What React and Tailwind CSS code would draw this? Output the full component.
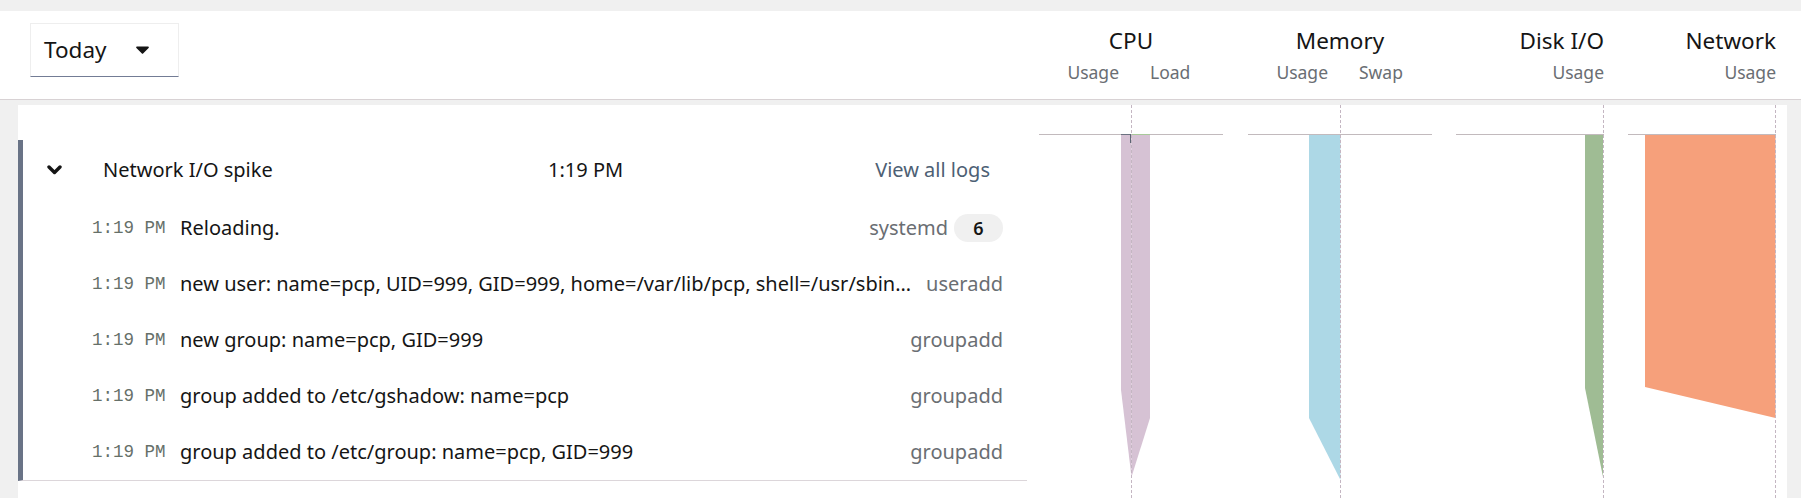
import React from "react";

const logs = [
  { time: "1:19 PM", msg: "Reloading.", src: "systemd", count: 6 },
  { time: "1:19 PM", msg: "new user: name=pcp, UID=999, GID=999, home=/var/lib/pcp, shell=/usr/sbin/nologin, from=none", src: "useradd" },
  { time: "1:19 PM", msg: "new group: name=pcp, GID=999", src: "groupadd" },
  { time: "1:19 PM", msg: "group added to /etc/gshadow: name=pcp", src: "groupadd" },
  { time: "1:19 PM", msg: "group added to /etc/group: name=pcp, GID=999", src: "groupadd" },
];

// chart columns, coordinates relative to the column box (card top = 0)
const charts = [
  {
    key: "cpu", width: 184, axis: 92.5,
    shapes: [
      { fill: "#d6c2d4", points: "82,29 92.5,29 92.5,372 82,285" },
      { fill: "#d6c2d4", points: "92.5,29 111,29 111,313 92.5,372" },
    ],
    marker: true,
  },
  {
    key: "mem", width: 184, axis: 92.5,
    shapes: [{ fill: "#add8e6", points: "61,29 92.5,29 92.5,375 61,313" }],
  },
  {
    key: "disk", width: 148, axis: 147,
    shapes: [{ fill: "#9fbc94", points: "129,29 147,29 147,372 129,283" }],
  },
  {
    key: "net", width: 148, axis: 147.5,
    shapes: [{ fill: "#f6a07b", points: "17,29 147.5,29 147.5,313 17,282" }],
  },
];

function Caret() {
  return (
    <svg width="13" height="8" viewBox="0 0 13 8" className="ml-auto mr-[29px]">
      <path d="M1 0.5h11c0.8 0 1.2 0.9 0.6 1.5l-5.5 5.5c-0.3 0.3-0.9 0.3-1.2 0L0.4 2C-0.2 1.4 0.2 0.5 1 0.5z" fill="#151515" />
    </svg>
  );
}

function Chevron() {
  return (
    <svg width="15" height="10" viewBox="0 0 15 10" className="shrink-0">
      <path d="M2 2l5.5 5.5L13 2" fill="none" stroke="#151515" strokeWidth="3.4" strokeLinecap="round" strokeLinejoin="round" />
    </svg>
  );
}

function ChartColumn({ c }) {
  return (
    <svg width={c.width} height="393" className="shrink-0 block">
      {c.shapes.map((s, i) => (
        <polygon key={i} points={s.points} fill={s.fill} />
      ))}
      <line x1="0" x2={c.width} y1="29.5" y2="29.5" stroke="#c2babd" strokeWidth="1" shapeRendering="crispEdges" />
      <line x1={c.axis} x2={c.axis} y1="0" y2="393" stroke="#c4b6c2" strokeWidth="1" strokeDasharray="3 2" shapeRendering="crispEdges" />
      {c.marker && (
        <g shapeRendering="crispEdges">
          <line x1="82" x2="92" y1="29.5" y2="29.5" stroke="#6b7280" strokeWidth="1" />
          <line x1="91.5" x2="91.5" y1="29" y2="38" stroke="#5b6472" strokeWidth="1" />
          <line x1="93" x2="111" y1="29.5" y2="29.5" stroke="#a8c99a" strokeWidth="1" />
        </g>
      )}
    </svg>
  );
}

function MetricHead({ title, subs, width, split, className = "" }) {
  return (
    <div className={`shrink-0 pt-[16px] ${className}`} style={{ width }}>
      <div className={`text-[22.5px] leading-[28px] ${split ? "text-center" : "text-right"}`}>{title}</div>
      {split ? (
        <div className="grid grid-cols-2 mt-[6px] text-[17.5px] leading-[22px] text-[#6a6e73]">
          <span className="text-right pr-[12px]">{subs[0]}</span>
          <span className="pl-[19px]">{subs[1]}</span>
        </div>
      ) : (
        <div className="mt-[6px] text-[17.5px] leading-[22px] text-[#6a6e73] text-right">{subs[0]}</div>
      )}
    </div>
  );
}

export default function App() {
  return (
    <div className="w-[1801px] h-[498px] overflow-hidden bg-[#f0f0f0] text-[#151515] font-['Noto_Sans',sans-serif]">
      <div className="h-[11px]" />

      {/* toolbar with range picker and metric headings */}
      <header className="h-[89px] bg-white border-b border-[#d8d2d4]">
        <div className="ml-[18px] w-[1769px] flex">
          <div className="w-[1009px] pt-[12px] pl-[12px] shrink-0">
            <button className="w-[149px] h-[54px] flex items-center pl-[13px] border border-[#eeeeee] border-b-[#737c95] text-[22.5px] leading-none">
              <span>Today</span>
              <Caret />
            </button>
          </div>
          <div className="ml-[12px] flex">
            <MetricHead title="CPU" subs={["Usage", "Load"]} width={184} split />
            <MetricHead title="Memory" subs={["Usage", "Swap"]} width={184} split className="ml-[25px]" />
            <MetricHead title="Disk I/O" subs={["Usage"]} width={148} className="ml-[24px]" />
            <MetricHead title="Network" subs={["Usage"]} width={148} className="ml-[24px]" />
          </div>
        </div>
      </header>

      <div className="mt-[5px] ml-[18px] w-[1769px] h-[393px] bg-white flex">
        {/* events list */}
        <div className="w-[1009px] shrink-0 pt-[35px]">
          <div className="border-l-[5px] border-[#697386] border-b border-b-[#dcd6da]">
            <div className="h-[60px] flex items-center pl-[24px] pr-[37px] text-[20px]">
              <Chevron />
              <span className="ml-[41px] w-[445px] shrink-0">Network I/O spike</span>
              <span>1:19 PM</span>
              <span className="ml-auto text-[#4d6074]">View all logs</span>
            </div>
            {logs.map((l, i) => (
              <div key={i} className="h-[56px] flex items-center pl-[69px] pr-[24px]">
                <span className="w-[88px] shrink-0 font-['Liberation_Mono',monospace] text-[17.5px] text-[#667069]">{l.time}</span>
                <span className="flex-1 min-w-0 truncate text-[20px]">{l.msg}</span>
                <span className="ml-3 shrink-0 text-[20px] text-[#6a6e73]">{l.src}</span>
                {l.count && (
                  <span className="ml-[6px] w-[49px] h-[28px] rounded-full bg-[#f0f0f0] flex items-center justify-center text-[18px] font-semibold">
                    {l.count}
                  </span>
                )}
              </div>
            ))}
          </div>
        </div>

        {/* metric graphs */}
        <div className="ml-[12px] flex">
          <ChartColumn c={charts[0]} />
          <div className="w-[25px] shrink-0" />
          <ChartColumn c={charts[1]} />
          <div className="w-[24px] shrink-0" />
          <ChartColumn c={charts[2]} />
          <div className="w-[24px] shrink-0" />
          <ChartColumn c={charts[3]} />
        </div>
      </div>
    </div>
  );
}
